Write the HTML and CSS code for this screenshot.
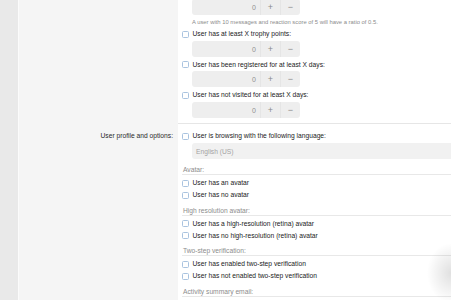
FILE: index.html
```html
<!doctype html>
<html lang="en">
  <head>
    <meta charset="UTF-8" />
    <meta name="viewport" content="width=device-width, initial-scale=1.0" />
    <title>User criteria</title>
    <link rel="stylesheet" href="styles.css">
  </head>
  <body>
    <div class="page">
      <div class="rail"></div>
      <div class="form">
        <!-- tail of the messages / reactions row -->
        <div class="form-row">
          <div class="row-label"></div>
          <div class="row-input">
            <div class="dependent first">
              <div class="num">
                <span class="num-value">0</span>
                <button class="num-btn">+</button>
                <button class="num-btn">&minus;</button>
              </div>
              <div class="explain">A user with 10 messages and reaction score of 5 will have a ratio of 0.5.</div>
            </div>
            <ul class="choices">
              <li class="choice">
                <label class="check"><input type="checkbox" /> User has at least X trophy points:</label>
                <div class="dependent">
                  <div class="num">
                    <span class="num-value">0</span>
                    <button class="num-btn">+</button>
                    <button class="num-btn">&minus;</button>
                  </div>
                </div>
              </li>
              <li class="choice">
                <label class="check"><input type="checkbox" /> User has been registered for at least X days:</label>
                <div class="dependent">
                  <div class="num">
                    <span class="num-value">0</span>
                    <button class="num-btn">+</button>
                    <button class="num-btn">&minus;</button>
                  </div>
                </div>
              </li>
              <li class="choice">
                <label class="check"><input type="checkbox" /> User has not visited for at least X days:</label>
                <div class="dependent">
                  <div class="num">
                    <span class="num-value">0</span>
                    <button class="num-btn">+</button>
                    <button class="num-btn">&minus;</button>
                  </div>
                </div>
              </li>
            </ul>
          </div>
        </div>

        <div class="form-row">
          <div class="row-label">User profile and options:</div>
          <div class="row-input last">
            <ul class="choices">
              <li class="choice first">
                <label class="check"><input type="checkbox" /> User is browsing with the following language:</label>
                <div class="dependent">
                  <div class="select">English (US)</div>
                </div>
              </li>

              <li class="heading">Avatar:</li>
              <li class="choice"><label class="check"><input type="checkbox" /> User has an avatar</label></li>
              <li class="choice"><label class="check"><input type="checkbox" /> User has no avatar</label></li>

              <li class="heading">High resolution avatar:</li>
              <li class="choice"><label class="check"><input type="checkbox" /> User has a high-resolution (retina) avatar</label></li>
              <li class="choice"><label class="check"><input type="checkbox" /> User has no high-resolution (retina) avatar</label></li>

              <li class="heading">Two-step verification:</li>
              <li class="choice"><label class="check"><input type="checkbox" /> User has enabled two-step verification</label></li>
              <li class="choice"><label class="check"><input type="checkbox" /> User has not enabled two-step verification</label></li>

              <li class="heading">Activity summary email:</li>
            </ul>
          </div>
        </div>
      </div>
    </div>
    <div class="corner-shadow"></div>
  </body>
</html>
```

FILE: styles.css
```css
html,
body {
  margin: 0;
  padding: 0;
  height: 300px;
  overflow: hidden;
}

body {
  font-family: "Liberation Sans", Arial, sans-serif;
  font-size: 6.7px;
  color: #222;
  background: #fff;
}

.page {
  display: flex;
  min-height: 300px;
}

.rail {
  width: 18px;
  flex: none;
  background: #e9e9e9;
  border-right: 1px solid #fbfbfb;
}

.form {
  flex: 1;
  background: linear-gradient(to right, #f5f5f5 159px, #fff 159px);
}

.form-row {
  display: grid;
  grid-template-columns: 159px 1fr;
}

.row-label {
  padding: 8px 5px 0 0;
  line-height: 8px;
  text-align: right;
  color: #2a2a2a;
}

.row-input {
  padding: 0 0 5.5px 0;
  border-bottom: 1px solid #e6e6e6;
}

.row-input.last {
  padding-top: 6px;
  border-bottom: 0;
}

.choices {
  list-style: none;
  margin: 0;
  padding: 0 0 0 4px;
}

.choice {
  margin-top: 2px;
}

.choice.first {
  margin-top: 0;
}

.check {
  display: flex;
  align-items: center;
  padding-top: 2px;
  line-height: 8px;
  white-space: nowrap;
}

.check input {
  appearance: none;
  -webkit-appearance: none;
  width: 7px;
  height: 7px;
  margin: 0 3.5px 0 0;
  box-sizing: border-box;
  border: 1px solid #a9c3df;
  border-radius: 1.5px;
  background: #fff;
  flex: none;
}

.dependent {
  margin: 2.5px 0 0 10px;
}

.dependent.first {
  margin: -1px 0 0 14px;
}

.num {
  display: flex;
  width: 108px;
  height: 16px;
  background: #eeeeee;
  border-radius: 3px;
  overflow: hidden;
}

.num-value {
  flex: 1;
  text-align: right;
  padding-right: 4px;
  line-height: 17px;
  font-size: 7px;
  color: #8e8e8e;
}

.num-btn {
  width: 20px;
  padding: 0;
  border: 0;
  border-left: 1px solid #e5e5e5;
  background: transparent;
  font-family: "Liberation Sans", Arial, sans-serif;
  font-size: 9px;
  line-height: 16px;
  color: #8a8a8a;
}

.explain {
  margin-top: 2.5px;
  padding-top: 1.5px;
  line-height: 7px;
  font-size: 5.85px;
  color: #8c8c8c;
  white-space: nowrap;
}

.select {
  height: 16px;
  padding-left: 4px;
  line-height: 17px;
  background: #f1f1f1;
  border-radius: 3px 0 0 3px;
  color: #a3a3a3;
}

.heading {
  margin-top: 5.5px;
  padding: 2px 0 0 1px;
  line-height: 8px;
  color: #8c8c8c;
  border-bottom: 1px solid #e8e8e8;
}

.corner-shadow {
  position: absolute;
  right: 0;
  bottom: 0;
  width: 24px;
  height: 60px;
  background: radial-gradient(ellipse 24px 30px at 100% 55%, rgba(0, 0, 0, 0.12), rgba(0, 0, 0, 0) 100%);
  pointer-events: none;
}
```
